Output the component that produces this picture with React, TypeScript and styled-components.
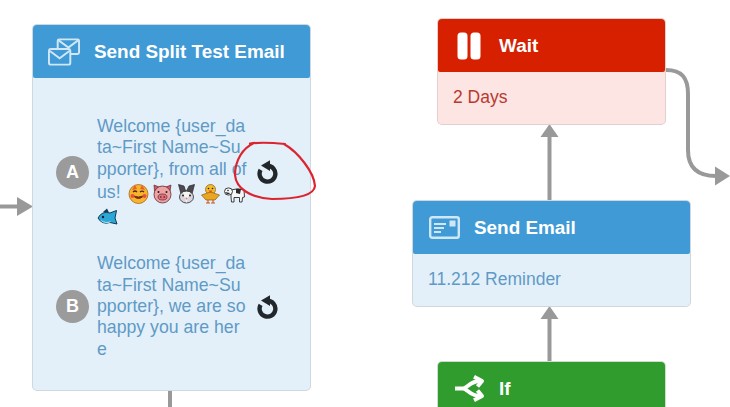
import React from "react";
import styled, { createGlobalStyle } from "styled-components";

const GlobalStyle = createGlobalStyle`
  html, body {
    margin: 0;
    padding: 0;
    background: #fff;
  }
  body {
    font-family: "Liberation Sans", Arial, sans-serif;
  }
`;

const tones = {
  blue: { head: "#3f9ad6", body: "#e3f0f9", text: "#5f9ac6", line: "#cfd8de" },
  red: { head: "#d62000", body: "#fde5e3", text: "#b83a2e", line: "#e3cfcd" },
  green: { head: "#2f9c2d", body: "#e4f5e4", text: "#3f8a3f", line: "#cfdccf" },
};
type Tone = keyof typeof tones;

// the diagram is a free canvas, nodes sit at their own coordinates
const Canvas = styled.div`
  position: relative;
  width: 730px;
  height: 407px;
  overflow: hidden;
  background: #fff;
`;

const Node = styled.div<{ $x: number; $y: number; $w: number; $tone: Tone }>`
  position: absolute;
  left: ${(p) => p.$x}px;
  top: ${(p) => p.$y}px;
  width: ${(p) => p.$w}px;
  box-sizing: border-box;
  display: flex;
  flex-direction: column;
  border-radius: 4px;
  background: ${(p) => tones[p.$tone].body};
  box-shadow: 0 0 0 1px ${(p) => tones[p.$tone].line};
`;

const Header = styled.div<{ $tone: Tone }>`
  display: flex;
  align-items: center;
  gap: 14px;
  height: 53px;
  padding-left: 15px;
  border-radius: 4px 4px 2px 2px;
  background: ${(p) => tones[p.$tone].head};
`;

const IconSlot = styled.div`
  width: 32px;
  display: flex;
  justify-content: center;
  align-items: center;
  flex: none;
`;

const Title = styled.div`
  color: #fff;
  font-size: 18.9px;
  font-weight: 700;
  white-space: nowrap;
`;

const Body = styled.div<{ $tone: Tone }>`
  height: 52px;
  display: flex;
  align-items: center;
  padding-left: 15px;
  padding-bottom: 2px;
  box-sizing: border-box;
  font-size: 17.5px;
  color: ${(p) => tones[p.$tone].text};
`;

const SplitBody = styled.div`
  display: flex;
  flex-direction: column;
  gap: 25px;
  height: 312px;
  padding: 38px 0 0 23px;
  box-sizing: border-box;
`;

const VariantRow = styled.div`
  display: flex;
  align-items: center;
`;

const Badge = styled.div`
  width: 33px;
  height: 33px;
  border-radius: 50%;
  flex: none;
  background: #9b9b9b;
  color: #fff;
  font-size: 18px;
  font-weight: 700;
  display: flex;
  align-items: center;
  justify-content: center;
`;

const Subject = styled.div`
  width: 151px;
  margin-left: 8px;
  flex: none;
  font-size: 17.7px;
  line-height: 21.4px;
  color: #5f9ac6;
  word-break: break-all;
`;

const RetryIcon = styled.svg`
  width: 22px;
  height: 24px;
  margin-left: 9px;
  flex: none;
`;

const EmojiBox = styled.svg`
  width: 21px;
  height: 21px;
  margin: 3px 3px 0 0;
  vertical-align: -6px;
`;

const EmojiGap = styled.span`
  display: inline-block;
  width: 2px;
`;

const Connector = styled.svg`
  position: absolute;
  left: 0;
  top: 0;
  pointer-events: none;
`;

const Retry = () => (
  <RetryIcon viewBox="0 0 22 24">
    <path d="M10.5 5.8 A7.9 7.9 0 1 1 3.6 9.8" fill="none" stroke="#22272b" strokeWidth="4.4" />
    <path d="M13 0.2 L13 11 L4 5.4 Z" fill="#22272b" />
  </RetryIcon>
);

const SplitIcon = () => (
  <svg width="33" height="28" viewBox="0 0 33 28" fill="none" stroke="#cfe7f6" strokeWidth="2">
    <rect x="10" y="1" width="22" height="15" rx="1.5" />
    <path d="M11 2 L21 9.5 L31 2" />
    <rect x="1" y="11" width="22" height="16" rx="2" fill="#3f9ad6" />
    <path d="M2 13 L12 20.5 L22 13" />
  </svg>
);

const PauseIcon = () => (
  <svg width="24" height="28" viewBox="0 0 24 28" fill="#fff">
    <rect x="0.5" y="0.5" width="10" height="27" rx="3.5" />
    <rect x="13.5" y="0.5" width="10" height="27" rx="3.5" />
  </svg>
);

const MailCardIcon = () => (
  <svg width="31" height="23" viewBox="0 0 31 23" fill="none" stroke="#cfe7f6" strokeWidth="2.4">
    <rect x="1.2" y="1.2" width="28.6" height="20.6" rx="2" />
    <path d="M5 8 H17 M5 12 H15 M5 16 H12" strokeWidth="2" />
    <rect x="20.5" y="4.5" width="6" height="6" fill="#cfe7f6" stroke="none" />
  </svg>
);

const BranchIcon = () => (
  <svg width="31" height="27" viewBox="0 0 31 27" fill="none" stroke="#fff" strokeWidth="4" strokeLinejoin="round">
    <path d="M1 13.5 H9 C 13 13.5, 16 6, 26 6 M9 13.5 C 13 13.5, 16 21, 26 21" />
    <path d="M20 1.8 L28 6 L23.5 11.5 M23.5 15.5 L28 21 L20 25.2" />
  </svg>
);

const emojiArt: Record<string, React.ReactNode> = {
  smile: (
    <>
      <circle cx="10.5" cy="11" r="9.5" fill="#f6b52c" stroke="#a8641a" strokeWidth="0.8" />
      <path d="M4 7 L7 2 L9 6 M17 7 L14 2 L12 6" fill="#e8602c" />
      <path d="M5 9 Q7 7 9 9 M12 9 Q14 7 16 9" fill="none" stroke="#4a2a10" strokeWidth="1.2" />
      <path d="M5.5 13 Q10.5 18 15.5 13 Q10.5 15 5.5 13 Z" fill="#7a2c18" stroke="#7a2c18" />
      <circle cx="4.5" cy="13" r="2" fill="#e8503a" />
      <circle cx="16.5" cy="13" r="2" fill="#e8503a" />
    </>
  ),
  pig: (
    <>
      <path d="M2 2 L7 4 L14 4 L19 2 L18 8 L2.5 8 Z" fill="#d8556a" stroke="#5a2a30" strokeWidth="0.7" />
      <circle cx="10.5" cy="11.5" r="8.5" fill="#eda3a3" stroke="#5a2a30" strokeWidth="0.8" />
      <ellipse cx="10.5" cy="14" rx="4.5" ry="3" fill="#e0707c" stroke="#5a2a30" strokeWidth="0.7" />
      <circle cx="8.8" cy="14" r="0.8" fill="#4a1a20" />
      <circle cx="12.2" cy="14" r="0.8" fill="#4a1a20" />
      <circle cx="6.5" cy="9" r="1" fill="#2a1a1a" />
      <circle cx="14.5" cy="9" r="1" fill="#2a1a1a" />
    </>
  ),
  rabbit: (
    <>
      <path d="M5 11 L2.5 1.5 L8 3 L10 9 L13 3 L18.5 1.5 L16 11 Z" fill="#4c4a50" stroke="#2a282c" strokeWidth="0.7" />
      <ellipse cx="10.5" cy="14" rx="7" ry="6" fill="#d8d6da" stroke="#2a282c" strokeWidth="0.8" />
      <path d="M7 9 L10.5 20 L14 9 Z" fill="#f4f4f4" />
      <circle cx="7" cy="12.5" r="1" fill="#222" />
      <circle cx="14" cy="12.5" r="1" fill="#222" />
      <circle cx="10.5" cy="15.5" r="1" fill="#d8708a" />
    </>
  ),
  chick: (
    <>
      <circle cx="10.5" cy="6.5" r="5" fill="#f4bb2c" stroke="#8a5a14" strokeWidth="0.7" />
      <path d="M1.5 12 L10.5 9 L19.5 12 L15 17 L6 17 Z" fill="#eca522" stroke="#8a5a14" strokeWidth="0.7" />
      <path d="M8.5 7.5 L12.5 7.5 L10.5 10 Z" fill="#d8551c" />
      <circle cx="8.5" cy="5.5" r="0.8" fill="#2a1a10" />
      <circle cx="12.5" cy="5.5" r="0.8" fill="#2a1a10" />
      <path d="M8 17 V20 M13 17 V20 M6 20 H10 M11 20 H15" stroke="#c8561c" strokeWidth="1.1" />
    </>
  ),
  cow: (
    <>
      <path d="M7 7 Q14 4.5 20 7 L20.5 14 L18.5 14.5 L18 19 L15.5 19 L15.5 14.5 L10 14.5 L10 19 L7.5 19 L7 14 Z" fill="#f6f6f6" stroke="#2a2a2a" strokeWidth="0.9" />
      <path d="M12 6 L17 6 L16 11 L12 10 Z" fill="#2a2a2a" />
      <ellipse cx="4.5" cy="8.5" rx="4" ry="3.6" fill="#f6f6f6" stroke="#2a2a2a" strokeWidth="0.9" />
      <path d="M1 9 Q4 13 6 10 Z" fill="#2a2a2a" />
      <circle cx="4" cy="7.5" r="0.8" fill="#222" />
    </>
  ),
  fish: (
    <>
      <path d="M1 11 Q5 3.5 13 6 L19.5 3.5 L18 11 L20 17 L13 15.5 Q5 18 1 11 Z" fill="#2ba7d8" stroke="#103a50" strokeWidth="1" />
      <path d="M3 12.5 Q8 16.5 14 14 L13 15.5 Q6 17.5 3 12.5 Z" fill="#9adcf2" />
      <path d="M6 5 L10 1.5 L12 5.5 Z" fill="#103a50" />
      <circle cx="6" cy="10" r="1.2" fill="#08222e" />
    </>
  ),
};

const Emoji = ({ name }: { name: string }) => (
  <EmojiBox viewBox="0 0 21 21">{emojiArt[name]}</EmojiBox>
);

export default function App() {
  return (
    <>
      <GlobalStyle />
      <Canvas>
        <Connector width="730" height="407" viewBox="0 0 730 407">
          <g fill="none" stroke="#999" strokeWidth="4">
            <path d="M0 206.5 H19" />
            <path d="M170 390 V407" />
            <path d="M549.5 136 V201" />
            <path d="M549.5 318 V362" />
            <path d="M666 70 C 682 70, 688 78, 688 94 V 150 C 688 168, 698 176, 716 176" />
          </g>
          <g fill="#999">
            <path d="M33 206.5 L17 197 V216 Z" />
            <path d="M549.5 124 L540.5 137 H558.5 Z" />
            <path d="M549.5 306 L540.5 319 H558.5 Z" />
            <path d="M730 176 L715 166.5 V185.5 Z" />
          </g>
        </Connector>

        <Node $x={33} $y={25} $w={277} $tone="blue">
          <Header $tone="blue">
            <IconSlot>
              <SplitIcon />
            </IconSlot>
            <Title>Send Split Test Email</Title>
          </Header>
          <SplitBody>
            <VariantRow>
              <Badge>A</Badge>
              <Subject>
                Welcome {"{user_data~First Name~Supporter}"}, from all of us!{" "}
                <EmojiGap />
                <Emoji name="smile" />
                <Emoji name="pig" />
                <Emoji name="rabbit" />
                <Emoji name="chick" />
                <Emoji name="cow" />
                <Emoji name="fish" />
              </Subject>
              <Retry />
            </VariantRow>
            <VariantRow>
              <Badge>B</Badge>
              <Subject>
                Welcome {"{user_data~First Name~Supporter}"}, we are so happy you are here
              </Subject>
              <Retry />
            </VariantRow>
          </SplitBody>
        </Node>

        <Node $x={438} $y={19} $w={227} $tone="red">
          <Header $tone="red">
            <IconSlot>
              <PauseIcon />
            </IconSlot>
            <Title>Wait</Title>
          </Header>
          <Body $tone="red">2 Days</Body>
        </Node>

        <Node $x={413} $y={201} $w={277} $tone="blue">
          <Header $tone="blue">
            <IconSlot>
              <MailCardIcon />
            </IconSlot>
            <Title>Send Email</Title>
          </Header>
          <Body $tone="blue">11.212 Reminder</Body>
        </Node>

        <Node $x={438} $y={362} $w={227} $tone="green">
          <Header $tone="green">
            <IconSlot>
              <BranchIcon />
            </IconSlot>
            <Title>If</Title>
          </Header>
          <Body $tone="green">&nbsp;</Body>
        </Node>

        <Connector width="730" height="407" viewBox="0 0 730 407">
          <path
            d="M250 143.5 C 262 142, 275 143, 285 144 M254 143 C 243 148, 235 160, 235 175 C 236 188, 250 198, 272 199 C 295 199, 314 196, 315 186 C 314 172, 298 152, 284 144"
            fill="none"
            stroke="#dc2430"
            strokeWidth="2.2"
            strokeLinecap="round"
          />
        </Connector>
      </Canvas>
    </>
  );
}
